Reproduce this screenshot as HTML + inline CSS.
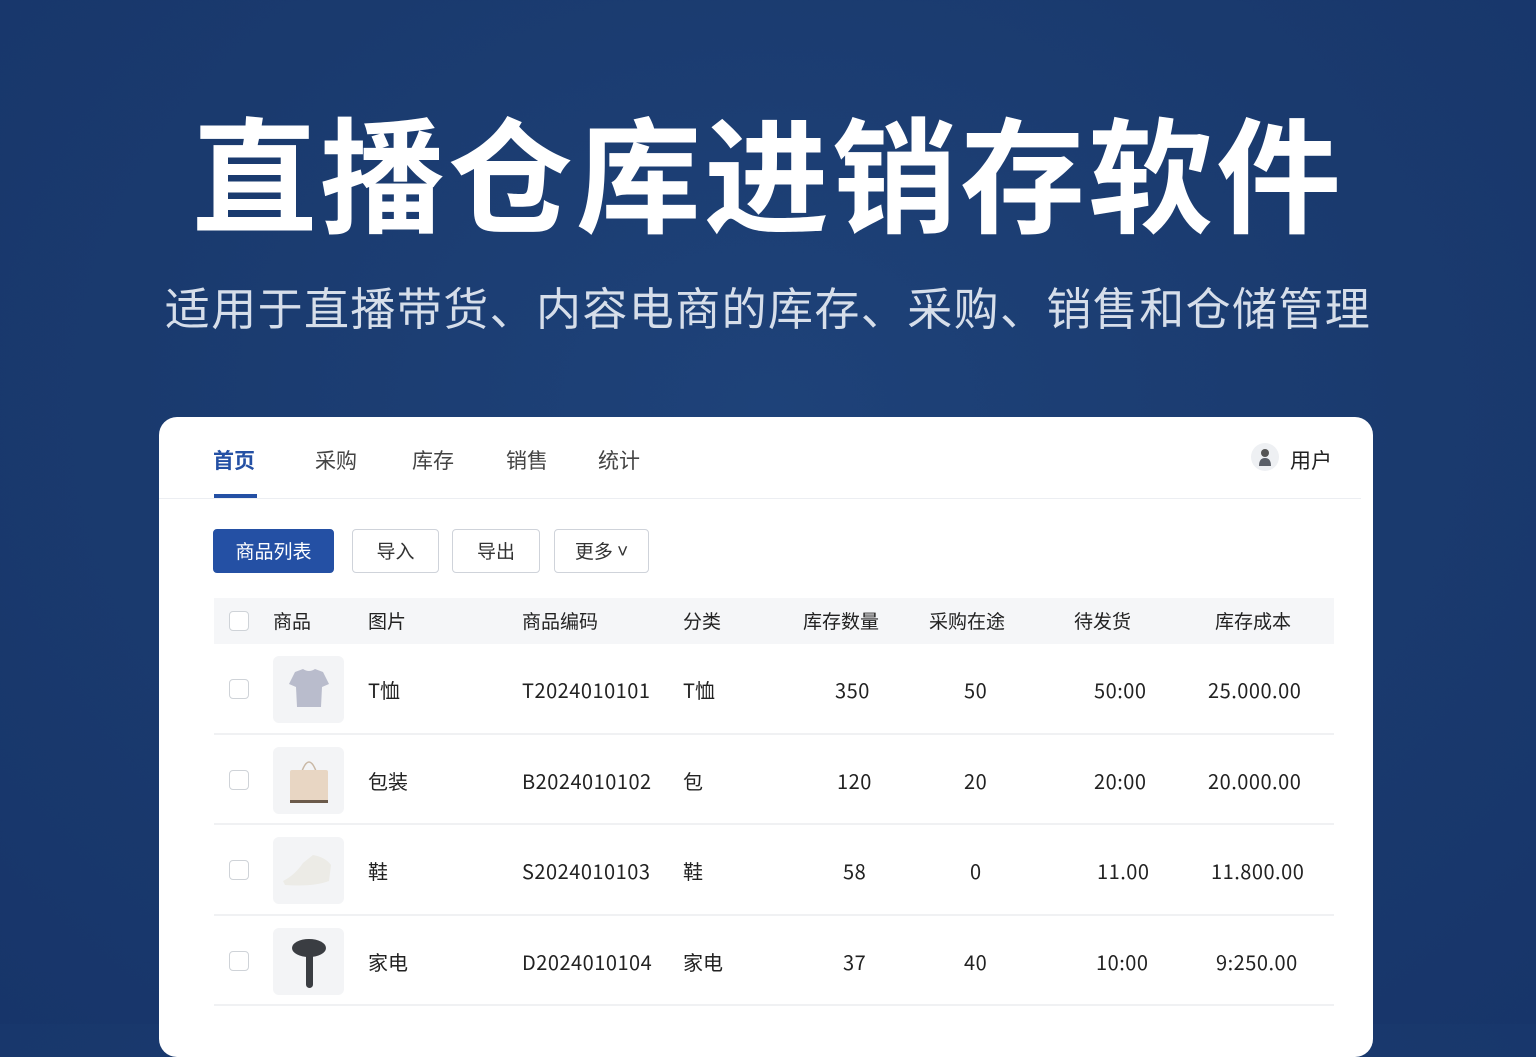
<!DOCTYPE html>
<html><head><meta charset="utf-8"><style>
*{margin:0;padding:0;box-sizing:border-box}
body{width:1536px;height:1024px;overflow:hidden;background:radial-gradient(ellipse at 50% 40%,#1e4279 0%,#1a3a6e 60%,#17356a 100%);font-family:"Liberation Sans","Noto Sans CJK SC",sans-serif;position:relative}
.t{position:absolute;left:0;width:1536px;text-align:center;color:#fff}
h1{position:absolute;top:106px;left:0;width:1536px;text-align:center;color:#fff;font-size:125px;font-weight:700;letter-spacing:3px;line-height:150px}
.sub{top:280px;font-size:45px;color:#d6deea;line-height:60px;letter-spacing:1.4px}
.card{position:absolute;left:159px;top:417px;width:1214px;height:640px;background:#fff;border-radius:18px}
.nav{position:absolute;top:0;left:0;right:12px;height:82px;border-bottom:1px solid #eceef2;font-family:"Noto Sans CJK SC",sans-serif}
.nav span{position:absolute;top:28px;font-size:21px;color:#444;line-height:30px}
.btn{position:absolute;top:112px;height:44px;border:1px solid #cfd3da;border-radius:4px;font-size:19px;color:#333;text-align:center;line-height:42px;font-family:"Noto Sans CJK SC",sans-serif}
.tbl{position:absolute;left:55px;top:181px;width:1120px;font-family:"Noto Sans CJK SC",sans-serif}
.hd{height:46px;background:#f5f6f8;position:relative;font-size:19px;color:#222}
.row{height:90.5px;border-bottom:2px solid #f0f1f3;position:relative;font-size:20px;color:#222}
.c{position:absolute;white-space:nowrap;line-height:24px}
.row .n{letter-spacing:0.5px}
.hd .c{top:11px}.row .c{top:34px}
.cb{position:absolute;left:15px;width:20px;height:20px;border:1.5px solid #cfd3d8;border-radius:4px;background:#fff}
.img{position:absolute;left:59px;top:12px;width:71px;height:67px;background:#f3f4f6;border-radius:6px}
</style></head><body>
<h1>直播仓库进销存软件</h1>
<div class="t sub">适用于直播带货、内容电商的库存、采购、销售和仓储管理</div>
<div class="card">
 <div class="nav">
  <span style="left:54px;color:#2450a4;font-weight:700">首页</span>
  <div style="position:absolute;left:55px;top:77px;width:43px;height:4px;background:#2450a4"></div>
  <span style="left:156px">采购</span><span style="left:253px">库存</span><span style="left:347px">销售</span><span style="left:439px">统计</span>
  <div style="position:absolute;left:1092px;top:26px;width:28px;height:28px;border-radius:50%;background:#eef0f3"><svg width="28" height="28"><circle cx="14" cy="10" r="4" fill="#555"/><path d="M8 23 Q8 15 14 15 Q20 15 20 23Z" fill="#5a5f68"/></svg></div>
  <span style="left:1131px;color:#222">用户</span>
 </div>
 <div class="btn" style="left:54px;width:121px;background:#2450a4;border-color:#2450a4;color:#fff">商品列表</div>
 <div class="btn" style="left:193px;width:87px">导入</div>
 <div class="btn" style="left:293px;width:88px">导出</div>
 <div class="btn" style="left:395px;width:95px">更多 ˅</div>
 <div class="tbl">
  <div class="hd"><div class="cb" style="top:13px"></div>
   <span class="c" style="left:59px">商品</span><span class="c" style="left:154px">图片</span><span class="c" style="left:308px">商品编码</span><span class="c" style="left:469px">分类</span><span class="c" style="left:589px">库存数量</span><span class="c" style="left:715px">采购在途</span><span class="c" style="left:860px">待发货</span><span class="c" style="left:1001px">库存成本</span></div>
  <div class="row"><div class="cb" style="top:35px"></div><div class="img"><svg width="71" height="67"><path d="M22 16 L30 13 Q36 17 42 13 L50 16 L56 28 L49 31 L48 51 L24 51 L23 31 L16 28Z" fill="#b9bccc"/></svg></div>
   <span class="c" style="left:154px">T恤</span><span class="c n" style="left:308px">T2024010101</span><span class="c" style="left:469px">T恤</span><span class="c n" style="left:621px">350</span><span class="c n" style="left:750px">50</span><span class="c n" style="left:880px">50:00</span><span class="c n" style="left:994px">25.000.00</span></div>
  <div class="row"><div class="cb" style="top:35px"></div><div class="img"><svg width="71" height="67"><path d="M29 24 Q36 6 43 24" stroke="#c9b8a5" stroke-width="1.5" fill="none"/><rect x="17" y="23" width="38" height="32" rx="2" fill="#e8d6c3"/><rect x="17" y="53" width="38" height="3" fill="#6b5a4a"/></svg></div>
   <span class="c" style="left:154px">包装</span><span class="c n" style="left:308px">B2024010102</span><span class="c" style="left:469px">包</span><span class="c n" style="left:623px">120</span><span class="c n" style="left:750px">20</span><span class="c n" style="left:880px">20:00</span><span class="c n" style="left:994px">20.000.00</span></div>
  <div class="row"><div class="cb" style="top:35px"></div><div class="img"><svg width="71" height="67"><path d="M10 44 Q22 38 30 26 L40 18 Q52 20 58 28 L56 44 Q40 50 12 48Z" fill="#ecebe6"/></svg></div>
   <span class="c" style="left:154px">鞋</span><span class="c n" style="left:308px">S2024010103</span><span class="c" style="left:469px">鞋</span><span class="c n" style="left:629px">58</span><span class="c n" style="left:756px">0</span><span class="c n" style="left:883px">11.00</span><span class="c n" style="left:997px">11.800.00</span></div>
  <div class="row"><div class="cb" style="top:35px"></div><div class="img"><svg width="71" height="67"><ellipse cx="36" cy="20" rx="17" ry="9" fill="#3a3d42"/><rect x="33" y="24" width="7" height="36" rx="3.5" fill="#3a3d42"/></svg></div>
   <span class="c" style="left:154px">家电</span><span class="c n" style="left:308px">D2024010104</span><span class="c" style="left:469px">家电</span><span class="c n" style="left:629px">37</span><span class="c n" style="left:750px">40</span><span class="c n" style="left:882px">10:00</span><span class="c n" style="left:1002px">9:250.00</span></div>
 </div>
</div>
</body></html>
